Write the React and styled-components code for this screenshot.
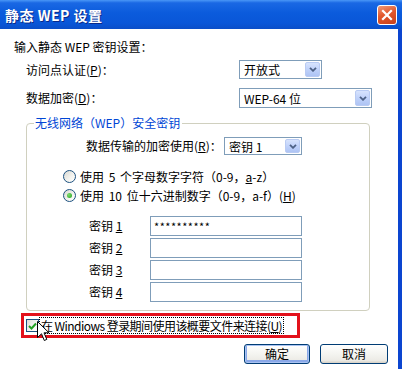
import React from "react";
import styled, { createGlobalStyle, css } from "styled-components";

const GlobalStyle = createGlobalStyle`
  html, body { margin: 0; padding: 0; background: #fff; }
  body {
    width: 402px;
    height: 369px;
    overflow: hidden;
    font-family: "Noto Sans CJK SC", "Liberation Sans", sans-serif;
    font-size: 12px;
    color: #000;
  }
  * { box-sizing: border-box; }
`;

const Window = styled.div`
  width: 402px;
  height: 369px;
  display: flex;
  flex-direction: column;
`;

const TitleBar = styled.div`
  height: 29px;
  flex: none;
  display: flex;
  align-items: center;
  justify-content: space-between;
  padding: 0 5px 0 5px;
  background: linear-gradient(180deg, #4a97f7 0%, #1a68e4 10%, #0b5bdc 45%, #0956d8 80%, #0a4ec8 100%);
`;

const Title = styled.span`
  color: #fff;
  font-size: 14px;
  font-weight: 700;
  line-height: 18px;
  text-shadow: 1px 1px 0 #0a2a8a;
  letter-spacing: 0.5px;
`;

const CloseButton = styled.div`
  width: 20px;
  height: 20px;
  border: 1px solid #fff;
  border-radius: 3px;
  background: linear-gradient(160deg, #f09a78 0%, #e2582d 45%, #c7401a 100%);
  display: grid;
  place-items: center;
`;

const Body = styled.div`
  flex: 1;
  display: flex;
  flex-direction: column;
  padding: 10px 10px 0 14px;
  border-right: 4px solid #0c45d0;
  background: #fff;
`;

const Heading = styled.div`
  line-height: 16px;
  height: 16px;
`;

const FieldRow = styled.div`
  display: flex;
  align-items: center;
  margin-top: ${(p) => p.$top}px;
  padding-left: 12px;
`;

const FieldLabel = styled.span`
  width: ${(p) => p.$w}px;
  flex: none;
  line-height: 16px;
  white-space: nowrap;
`;

const Acc = styled.span`
  text-decoration: underline;
`;

const SelectBox = styled.div`
  width: ${(p) => p.$w}px;
  height: ${(p) => p.$h || 19}px;
  flex: none;
  display: flex;
  align-items: center;
  justify-content: space-between;
  border: 1px solid #7f9db9;
  background: #fff;
  padding: 1px;
`;

const SelectText = styled.span`
  padding-left: 3px;
  line-height: 15px;
  white-space: nowrap;
`;

const DropButton = styled.span`
  width: 15px;
  height: 100%;
  display: grid;
  place-items: center;
  border-radius: 2px;
  background: linear-gradient(180deg, #d7e3fd 0%, #bccff9 60%, #aec4f4 100%);
  border: 1px solid #b9cbf3;
`;

const Chevron = () => (
  <svg width="8" height="5" viewBox="0 0 8 5">
    <path d="M1 0.8 L4 3.8 L7 0.8" fill="none" stroke="#4d6185" strokeWidth="1.8" />
  </svg>
);

const Select = ({ w, h, children }) => (
  <SelectBox $w={w} $h={h}>
    <SelectText>{children}</SelectText>
    <DropButton>
      <Chevron />
    </DropButton>
  </SelectBox>
);

const Group = styled.fieldset`
  margin: 7px 0 0 12px;
  width: 344px;
  border: 1px solid #d0d0bf;
  border-radius: 4px;
  padding: 6px 0 8px 0;
  min-width: 0;
`;

const Legend = styled.legend`
  margin-left: 7px;
  padding: 0 2px 0 1px;
  color: #0046d5;
  line-height: 16px;
`;

const KeyUseRow = styled.div`
  display: flex;
  align-items: center;
  padding-left: 59px;
`;

const RadioRow = styled.div`
  display: flex;
  align-items: center;
  gap: 4px;
  height: 19px;
  padding-left: 36px;
  margin-top: ${(p) => p.$top || 0}px;
  white-space: nowrap;
  word-spacing: 2px;
`;

const Radio = styled.span`
  width: 13px;
  height: 13px;
  flex: none;
  border-radius: 50%;
  border: 1px solid #1c5180;
  background: linear-gradient(135deg, #d8d8d2 0%, #f4f4f0 60%, #fff 100%);
  display: grid;
  place-items: center;
  ${(p) =>
    p.$checked &&
    css`
      &::after {
        content: "";
        width: 5px;
        height: 5px;
        border-radius: 50%;
        background: radial-gradient(circle at 35% 35%, #7fdc6c, #21a121);
      }
    `}
`;

const KeyList = styled.div`
  display: flex;
  flex-direction: column;
  gap: 2px;
  margin-top: 11px;
  padding-left: 62px;
`;

const KeyRow = styled.div`
  display: flex;
  align-items: center;
  height: 20px;
`;

const KeyLabel = styled.span`
  width: 61px;
  flex: none;
  line-height: 16px;
`;

const KeyInput = styled.input`
  width: 152px;
  height: 20px;
  border: 1px solid #7f9db9;
  padding: 0 3px;
  margin: 0;
  font-family: "Noto Sans CJK SC", "Liberation Sans", sans-serif;
  font-size: 11px;
  letter-spacing: 0.5px;
  color: #000;
  background: #fff;
  outline: none;
`;

const Highlight = styled.div`
  position: relative;
  margin: 2px 0 0 7px;
  width: 279px;
  height: 25px;
  border: 3px solid #e3111b;
  display: flex;
  align-items: center;
  gap: 1px;
  padding-left: 2px;
`;

const CheckBox = styled.span`
  width: 13px;
  height: 13px;
  flex: none;
  border: 1px solid #1c5180;
  background: linear-gradient(135deg, #dcdcd6 0%, #f5f5f1 60%, #fff 100%);
  display: grid;
  place-items: center;
`;

const FocusText = styled.span`
  outline: 1px dotted #000;
  outline-offset: 0;
  padding: 0 1px;
  line-height: 15px;
  white-space: nowrap;
  letter-spacing: -0.55px;
`;

const Cursor = styled.svg`
  position: absolute;
  left: 13px;
  top: 5px;
`;

const ButtonRow = styled.div`
  display: flex;
  justify-content: flex-end;
  gap: 10px;
  margin-top: 6px;
`;

const Button = styled.div`
  width: ${(p) => p.$w}px;
  height: 20px;
  border: 1px solid #003c74;
  border-radius: 3px;
  background: linear-gradient(180deg, #ffffff 0%, #f4f4f0 50%, #ecebe6 85%, #d6d0c5 100%);
  display: grid;
  place-items: center;
  line-height: 16px;
  ${(p) =>
    p.$default &&
    css`
      box-shadow: inset 0 0 0 1px #a9c3f2, inset 0 -1px 0 2px #8aa8e8;
    `}
`;

export default function App() {
  return (
    <>
      <GlobalStyle />
      <Window>
        <TitleBar>
          <Title>静态 WEP 设置</Title>
          <CloseButton>
            <svg width="12" height="12" viewBox="0 0 12 12">
              <path d="M2 2 L10 10 M10 2 L2 10" stroke="#fff" strokeWidth="2.2" strokeLinecap="square" />
            </svg>
          </CloseButton>
        </TitleBar>
        <Body>
          <Heading>输入静态 WEP 密钥设置：</Heading>
          <FieldRow $top={5}>
            <FieldLabel $w={213}>
              访问点认证(<Acc>P</Acc>)：
            </FieldLabel>
            <Select w={83}>开放式</Select>
          </FieldRow>
          <FieldRow $top={9}>
            <FieldLabel $w={213}>
              数据加密(<Acc>D</Acc>)：
            </FieldLabel>
            <Select w={133} h={20}>
              WEP-64 位
            </Select>
          </FieldRow>
          <Group>
            <Legend>无线网络（WEP）安全密钥</Legend>
            <KeyUseRow>
              <FieldLabel $w={138}>
                数据传输的加密使用(<Acc>R</Acc>)：
              </FieldLabel>
              <Select w={78} h={18}>
                密钥 1
              </Select>
            </KeyUseRow>
            <RadioRow $top={12}>
              <Radio />
              <span>
                使用 5 个字母数字字符（0-9，<Acc>a</Acc>-z）
              </span>
            </RadioRow>
            <RadioRow>
              <Radio $checked />
              <span>
                使用 10 位十六进制数字（0-9，a-f）(<Acc>H</Acc>)
              </span>
            </RadioRow>
            <KeyList>
              {[1, 2, 3, 4].map((n) => (
                <KeyRow key={n}>
                  <KeyLabel>
                    密钥 <Acc>{n}</Acc>
                  </KeyLabel>
                  <KeyInput readOnly value={n === 1 ? "**********" : ""} />
                </KeyRow>
              ))}
            </KeyList>
          </Group>
          <Highlight>
            <CheckBox>
              <svg width="9" height="8" viewBox="0 0 9 8">
                <path d="M1 4 L3.5 6.5 L8 1.5" fill="none" stroke="#21a121" strokeWidth="2" />
              </svg>
            </CheckBox>
            <FocusText>
              在 Windiows 登录期间使用该概要文件来连接(<Acc>U</Acc>)
            </FocusText>
            <Cursor width="13" height="21" viewBox="0 0 13 21">
              <path
                d="M0.5 0.5 L0.5 16.5 L4.5 12.8 L7.3 19.5 L9.8 18.4 L7 11.8 L12 11.8 Z"
                fill="#fff"
                stroke="#000"
                strokeWidth="1"
              />
            </Cursor>
          </Highlight>
          <ButtonRow>
            <Button $w={66} $default>
              确定
            </Button>
            <Button $w={68}>取消</Button>
          </ButtonRow>
        </Body>
      </Window>
    </>
  );
}
